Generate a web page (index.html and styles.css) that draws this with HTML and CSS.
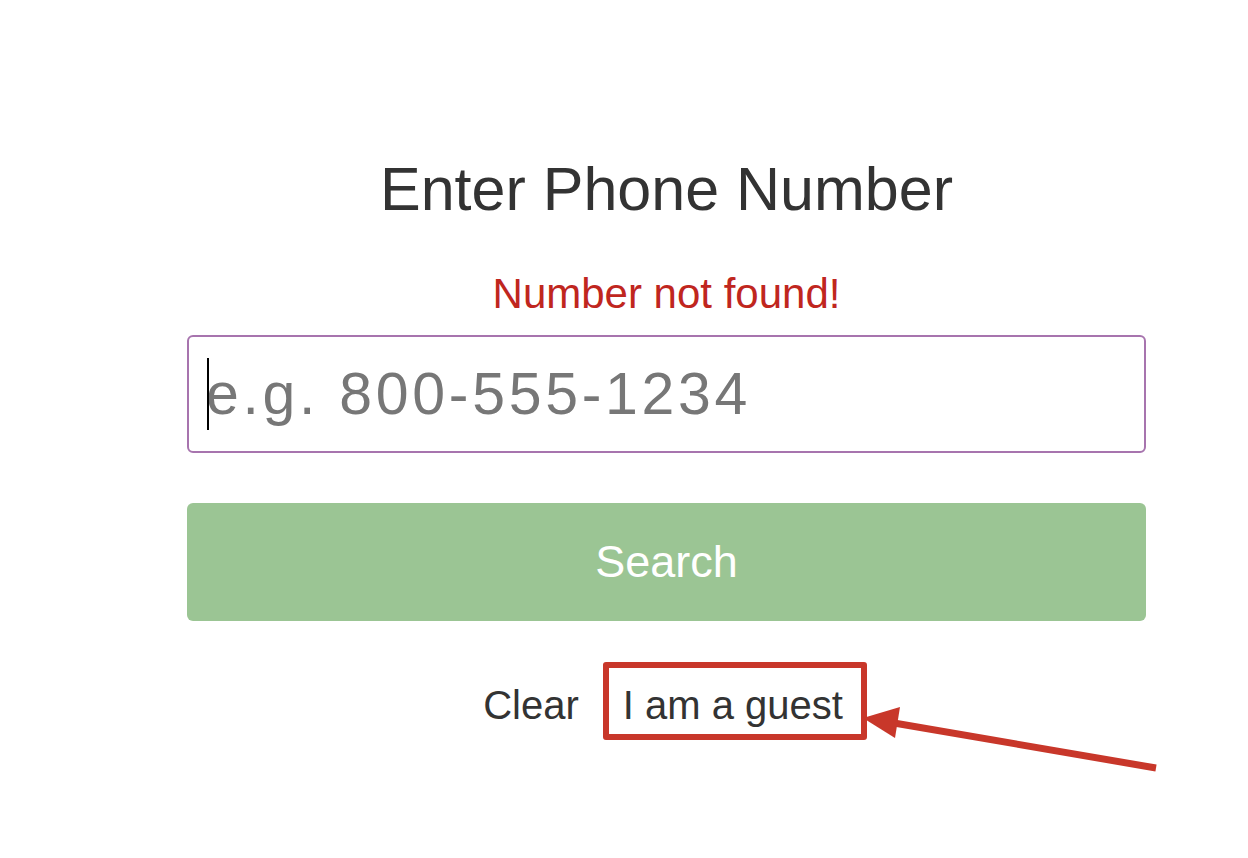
FILE: index.html
```html
<!DOCTYPE html>
<html>
<head>
<meta charset="utf-8">
<link rel="stylesheet" href="styles.css">
</head>
<body>
<div class="page">
  <main class="form">
    <h1 class="title">Enter Phone Number</h1>
    <p class="error">Number not found!</p>
    <div class="field">
      <span class="caret"></span>
      <input class="phone" type="text" placeholder="e.g. 800-555-1234">
    </div>
    <button class="search">Search</button>
    <div class="links">
      <a class="link">Clear</a>
      <a class="link guest">I am a guest</a>
    </div>
  </main>
  <svg class="arrow" width="320" height="90" viewBox="0 0 320 90">
    <line x1="44" y1="33" x2="306" y2="78" stroke="#c8372a" stroke-width="7"/>
    <polygon points="13,28 50,17 45,48" fill="#c8372a"/>
  </svg>
</div>
</body>
</html>
```
FILE: styles.css
```css
html, body {
  margin: 0;
  padding: 0;
  background: #ffffff;
}
.page {
  position: relative;
  width: 1248px;
  height: 858px;
  overflow: hidden;
  font-family: "Liberation Sans", Arial, sans-serif;
}
.form {
  display: flex;
  flex-direction: column;
  align-items: stretch;
  width: 959px;
  margin-left: 187px;
  padding-top: 154px;
}
.title {
  margin: 0;
  font-size: 61px;
  line-height: 70px;
  font-weight: normal;
  color: #333333;
  text-align: center;
}
.error {
  margin: 46px 0 0;
  font-size: 42px;
  line-height: 47px;
  color: #c0261e;
  text-align: center;
}
.field {
  position: relative;
  margin-top: 18px;
  height: 118px;
  box-sizing: border-box;
  border: 2px solid #a774ae;
  border-radius: 6px;
  display: flex;
  align-items: center;
}
.phone {
  border: none;
  outline: none;
  background: transparent;
  width: 100%;
  height: 100%;
  padding: 0 0 0 17px;
  box-sizing: border-box;
  font-family: "Liberation Sans", Arial, sans-serif;
  font-size: 59px;
  letter-spacing: 3.7px;
  color: #777777;
}
.phone::placeholder {
  color: #777777;
  opacity: 1;
}
.caret {
  position: absolute;
  left: 18px;
  top: 21px;
  width: 1.5px;
  height: 72px;
  background: #000000;
}
.search {
  margin-top: 50px;
  height: 118px;
  border: none;
  border-radius: 6px;
  background: #9bc594;
  color: #ffffff;
  font-family: "Liberation Sans", Arial, sans-serif;
  font-size: 45px;
  padding: 0;
}
.links {
  margin-top: 41px;
  display: flex;
  justify-content: center;
  align-items: baseline;
  gap: 24px;
  padding-left: 17px;
}
.link {
  font-size: 40px;
  color: #333333;
  line-height: 58px;
}
.guest {
  border: 6px solid #c8372a;
  border-radius: 3px;
  padding: 8px 18px 0 14px;
}
.arrow {
  position: absolute;
  left: 850px;
  top: 690px;
}
```
